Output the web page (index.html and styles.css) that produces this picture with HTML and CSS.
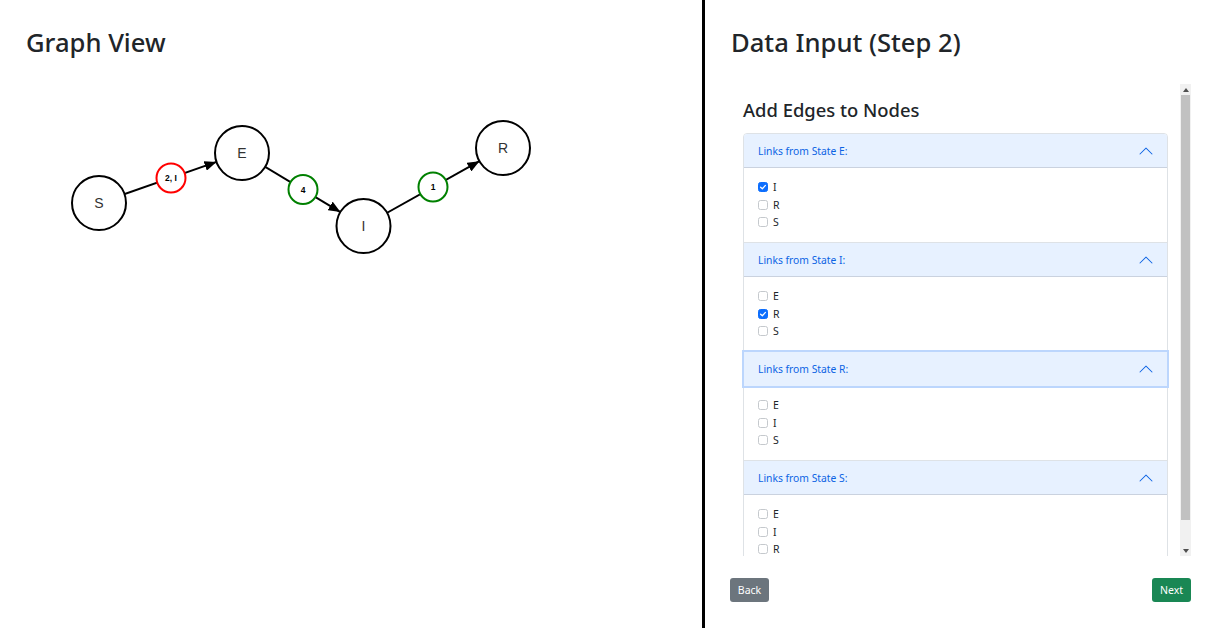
FILE: index.html
```html
<!DOCTYPE html>
<html lang="en">
<head>
<meta charset="utf-8">
<title>Graph Editor</title>
<link rel="stylesheet" href="styles.css">
</head>
<body>
<div class="app">
  <section class="graph-pane">
    <h2 class="pane-title">Graph View</h2>
    <svg class="graph" width="702" height="260" viewBox="0 58 702 260" xmlns="http://www.w3.org/2000/svg">
      <defs>
        <marker id="arrow" markerUnits="userSpaceOnUse" markerWidth="12" markerHeight="10" viewBox="0 0 12 10" refX="12" refY="5" orient="auto">
          <path d="M0,0 L12,5 L0,10 z" fill="#000"/>
        </marker>
      </defs>
      <g stroke="#000" stroke-width="2">
        <line x1="99" y1="203" x2="216.5" y2="161.9" marker-end="url(#arrow)"/>
        <line x1="242" y1="153" x2="340.4" y2="212.1" marker-end="url(#arrow)"/>
        <line x1="363.5" y1="226" x2="479.4" y2="161.2" marker-end="url(#arrow)"/>
      </g>
      <g stroke-width="2" fill="#fff">
        <circle cx="171" cy="178" r="14.5" stroke="#f00"/>
        <circle cx="303" cy="189.5" r="14.5" stroke="#008000"/>
        <circle cx="433" cy="187" r="14.5" stroke="#008000"/>
      </g>
      <g class="edge-label" text-anchor="middle" dominant-baseline="central">
        <text x="171" y="178">2, I</text>
        <text x="303" y="189.5">4</text>
        <text x="433" y="187">1</text>
      </g>
      <g stroke="#000" stroke-width="2" fill="#fff">
        <circle cx="99" cy="203" r="27"/>
        <circle cx="242" cy="153" r="27"/>
        <circle cx="363.5" cy="226" r="27"/>
        <circle cx="503" cy="148" r="27"/>
      </g>
      <g class="node-label" text-anchor="middle" dominant-baseline="central">
        <text x="99" y="203">S</text>
        <text x="242" y="153">E</text>
        <text x="363.5" y="226">I</text>
        <text x="503" y="148">R</text>
      </g>
    </svg>
  </section>

  <section class="input-pane">
    <h2 class="pane-title">Data Input (Step 2)</h2>
    <div class="scroll-wrap">
      <div class="scroll-content">
        <h4 class="step-title">Add Edges to Nodes</h4>
        <div class="accordion">
          <div class="acc-item">
            <button class="acc-header first">Links from State E:
              <svg class="chev" width="16" height="16" viewBox="0 0 16 16"><path d="M1.646 11.354a.5.5 0 0 0 .708 0L8 5.707l5.646 5.647a.5.5 0 0 0 .708-.708l-6-6a.5.5 0 0 0-.708 0l-6 6a.5.5 0 0 0 0 .708z"/></svg>
            </button>
            <div class="acc-body">
              <label class="check"><span class="box checked"><svg viewBox="0 0 10 10" width="8" height="8"><path d="M2 5.2 L4.2 7.2 L8 3" fill="none" stroke="#fff" stroke-width="1.6" stroke-linecap="round" stroke-linejoin="round"/></svg></span>I</label>
              <label class="check"><span class="box"></span>R</label>
              <label class="check"><span class="box"></span>S</label>
            </div>
          </div>
          <div class="acc-item">
            <button class="acc-header">Links from State I:
              <svg class="chev" width="16" height="16" viewBox="0 0 16 16"><path d="M1.646 11.354a.5.5 0 0 0 .708 0L8 5.707l5.646 5.647a.5.5 0 0 0 .708-.708l-6-6a.5.5 0 0 0-.708 0l-6 6a.5.5 0 0 0 0 .708z"/></svg>
            </button>
            <div class="acc-body">
              <label class="check"><span class="box"></span>E</label>
              <label class="check"><span class="box checked"><svg viewBox="0 0 10 10" width="8" height="8"><path d="M2 5.2 L4.2 7.2 L8 3" fill="none" stroke="#fff" stroke-width="1.6" stroke-linecap="round" stroke-linejoin="round"/></svg></span>R</label>
              <label class="check"><span class="box"></span>S</label>
            </div>
          </div>
          <div class="acc-item">
            <button class="acc-header focused">Links from State R:
              <svg class="chev" width="16" height="16" viewBox="0 0 16 16"><path d="M1.646 11.354a.5.5 0 0 0 .708 0L8 5.707l5.646 5.647a.5.5 0 0 0 .708-.708l-6-6a.5.5 0 0 0-.708 0l-6 6a.5.5 0 0 0 0 .708z"/></svg>
            </button>
            <div class="acc-body">
              <label class="check"><span class="box"></span>E</label>
              <label class="check"><span class="box"></span>I</label>
              <label class="check"><span class="box"></span>S</label>
            </div>
          </div>
          <div class="acc-item">
            <button class="acc-header">Links from State S:
              <svg class="chev" width="16" height="16" viewBox="0 0 16 16"><path d="M1.646 11.354a.5.5 0 0 0 .708 0L8 5.707l5.646 5.647a.5.5 0 0 0 .708-.708l-6-6a.5.5 0 0 0-.708 0l-6 6a.5.5 0 0 0 0 .708z"/></svg>
            </button>
            <div class="acc-body">
              <label class="check"><span class="box"></span>E</label>
              <label class="check"><span class="box"></span>I</label>
              <label class="check"><span class="box"></span>R</label>
            </div>
          </div>
        </div>
      </div>
      <div class="scrollbar">
        <div class="sb-btn"><svg width="6" height="4" viewBox="0 0 6 4"><path d="M0 4 L3 0 L6 4 z" fill="#505050"/></svg></div>
        <div class="sb-thumb"></div>
        <div class="sb-track"></div>
        <div class="sb-btn"><svg width="6" height="4" viewBox="0 0 6 4"><path d="M0 0 L6 0 L3 4 z" fill="#505050"/></svg></div>
      </div>
    </div>
    <div class="actions">
      <button class="btn btn-back">Back</button>
      <button class="btn btn-next">Next</button>
    </div>
  </section>
</div>
</body>
</html>
```

FILE: styles.css
```css
* {
  box-sizing: border-box;
}

html,
body {
  margin: 0;
  padding: 0;
}

body {
  font-family: "Noto Sans", "Open Sans", sans-serif;
  color: #212529;
  background: #fff;
}

.app {
  display: flex;
  height: 628px;
  overflow: hidden;
}

.graph-pane {
  width: 705px;
  flex: none;
  border-right: 3px solid #000;
  padding-top: 28px;
}

.pane-title {
  margin: 0;
  font-size: 25.6px;
  line-height: 30px;
  font-weight: 500;
  color: #212529;
  white-space: nowrap;
}

.graph-pane .pane-title {
  padding-left: 26px;
}

.graph {
  display: block;
}

.edge-label text {
  font-family: "Liberation Sans", Arial, sans-serif;
  font-size: 8.5px;
  font-weight: 700;
  fill: #000;
}

.node-label text {
  font-family: "Liberation Sans", Arial, sans-serif;
  font-size: 14px;
  fill: #333;
}

.input-pane {
  flex: 1;
  display: flex;
  flex-direction: column;
  padding: 28px 24px 0 26px;
}

.scroll-wrap {
  margin-top: 26px;
  height: 472px;
  display: flex;
}

.scroll-content {
  flex: 1;
  overflow: hidden;
  padding: 14px 12px 0 12px;
}

.step-title {
  margin: 0 0 12px;
  font-size: 18.4px;
  line-height: 23px;
  font-weight: 500;
  color: #212529;
}

.accordion {
  border: 1px solid #dee2e6;
  border-radius: 4px;
}

.acc-item + .acc-item {
  border-top: 1px solid #dee2e6;
}

.acc-header {
  display: flex;
  align-items: center;
  justify-content: space-between;
  width: 100%;
  height: 34px;
  padding: 0 13px 0 14px;
  border: 0;
  margin: 0;
  background: #e7f1ff;
  color: #0c63e4;
  font-family: inherit;
  font-size: 10.3px;
  text-align: left;
  box-shadow: inset 0 -1px 0 rgba(0, 0, 0, 0.125);
  position: relative;
}

.acc-header.first {
  border-radius: 3px 3px 0 0;
}

.acc-header.focused {
  z-index: 2;
  box-shadow: 0 0 0 2px #bcd6fd;
}

.chev {
  fill: #0c63e4;
  flex: none;
}

.acc-body {
  padding: 10.5px 14px 11px;
}

.check {
  display: flex;
  align-items: center;
  height: 17.5px;
  font-size: 10.5px;
  color: #212529;
}

.box {
  width: 10px;
  height: 10px;
  border: 1px solid #c5c9cd;
  border-radius: 2.5px;
  margin-right: 5px;
  background: #fff;
  display: flex;
  align-items: center;
  justify-content: center;
  flex: none;
}

.box.checked {
  background: #0d6efd;
  border-color: #0d6efd;
}

.box svg {
  display: block;
}

.scrollbar {
  width: 11px;
  flex: none;
  background: #f1f1f1;
  display: flex;
  flex-direction: column;
}

.sb-btn {
  height: 11px;
  display: flex;
  align-items: center;
  justify-content: center;
  flex: none;
}

.sb-thumb {
  height: 425px;
  margin: 0 1px;
  background: #c1c1c1;
  flex: none;
}

.sb-track {
  flex: 1;
}

.actions {
  display: flex;
  justify-content: space-between;
  margin-top: 22px;
}

.btn {
  height: 24px;
  width: 39px;
  padding: 0;
  border: 0;
  border-radius: 3px;
  color: #fff;
  font-family: inherit;
  font-size: 10.5px;
}

.btn-back {
  background: #6c757d;
  margin-left: -1px;
}

.btn-next {
  background: #198754;
}
```
